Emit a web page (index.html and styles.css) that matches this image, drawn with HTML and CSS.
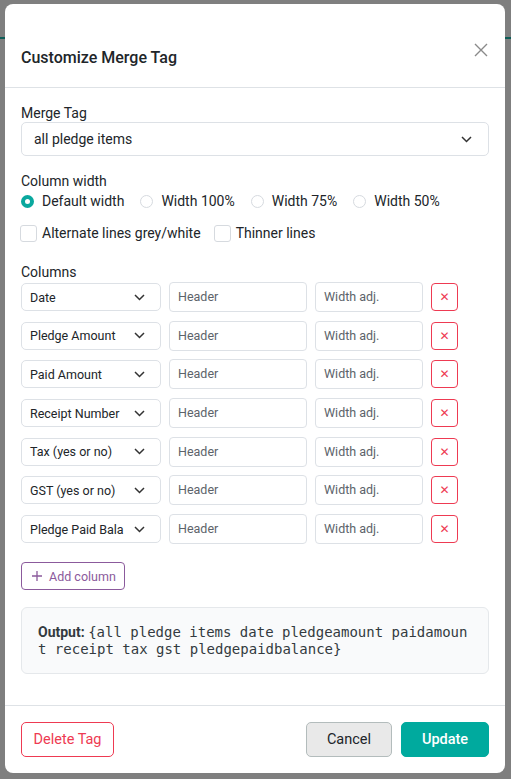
FILE: index.html
```html
<!DOCTYPE html>
<html>

<head>
    <meta http-equiv="Content-Type" content="text/html; charset=utf-8" />
    <title>Customize Merge Tag</title>
    <link rel="stylesheet" href="styles.css">
</head>

<body>
    <div class="modal">
        <div class="modal-header">
            <h5 class="modal-title">Customize Merge Tag</h5>
            <button class="close-btn" aria-label="Close">
                <svg width="14" height="14" viewBox="0 0 14 14"><path d="M1 1L13 13M13 1L1 13" stroke="#8a8a8a" stroke-width="1.4" fill="none"/></svg>
            </button>
        </div>

        <div class="modal-body">
            <label class="field-label">Merge Tag</label>
            <div class="select select-lg">
                <span>all pledge items</span>
                <svg class="chevron" width="11" height="7" viewBox="0 0 11 7"><path d="M1 1L5.5 5.5L10 1" stroke="#333" stroke-width="1.5" fill="none"/></svg>
            </div>

            <label class="field-label spaced">Column width</label>
            <div class="radio-row">
                <span class="radio checked"></span><span class="opt">Default width</span>
                <span class="radio"></span><span class="opt">Width 100%</span>
                <span class="radio"></span><span class="opt">Width 75%</span>
                <span class="radio"></span><span class="opt">Width 50%</span>
            </div>

            <div class="check-row">
                <span class="checkbox"></span><span class="opt">Alternate lines grey/white</span>
                <span class="checkbox"></span><span class="opt">Thinner lines</span>
            </div>

            <label class="field-label columns-label">Columns</label>
            <div class="col-list">
                <div class="col-row">
                    <div class="select select-sm"><span>Date</span><svg class="chevron" width="11" height="7" viewBox="0 0 11 7"><path d="M1 1L5.5 5.5L10 1" stroke="#333" stroke-width="1.5" fill="none"/></svg></div>
                    <div class="input header-input">Header</div>
                    <div class="input width-input">Width adj.</div>
                    <button class="remove-btn">&#x2715;</button>
                </div>
                <div class="col-row">
                    <div class="select select-sm"><span>Pledge Amount</span><svg class="chevron" width="11" height="7" viewBox="0 0 11 7"><path d="M1 1L5.5 5.5L10 1" stroke="#333" stroke-width="1.5" fill="none"/></svg></div>
                    <div class="input header-input">Header</div>
                    <div class="input width-input">Width adj.</div>
                    <button class="remove-btn">&#x2715;</button>
                </div>
                <div class="col-row">
                    <div class="select select-sm"><span>Paid Amount</span><svg class="chevron" width="11" height="7" viewBox="0 0 11 7"><path d="M1 1L5.5 5.5L10 1" stroke="#333" stroke-width="1.5" fill="none"/></svg></div>
                    <div class="input header-input">Header</div>
                    <div class="input width-input">Width adj.</div>
                    <button class="remove-btn">&#x2715;</button>
                </div>
                <div class="col-row">
                    <div class="select select-sm"><span>Receipt Number</span><svg class="chevron" width="11" height="7" viewBox="0 0 11 7"><path d="M1 1L5.5 5.5L10 1" stroke="#333" stroke-width="1.5" fill="none"/></svg></div>
                    <div class="input header-input">Header</div>
                    <div class="input width-input">Width adj.</div>
                    <button class="remove-btn">&#x2715;</button>
                </div>
                <div class="col-row">
                    <div class="select select-sm"><span>Tax (yes or no)</span><svg class="chevron" width="11" height="7" viewBox="0 0 11 7"><path d="M1 1L5.5 5.5L10 1" stroke="#333" stroke-width="1.5" fill="none"/></svg></div>
                    <div class="input header-input">Header</div>
                    <div class="input width-input">Width adj.</div>
                    <button class="remove-btn">&#x2715;</button>
                </div>
                <div class="col-row">
                    <div class="select select-sm"><span>GST (yes or no)</span><svg class="chevron" width="11" height="7" viewBox="0 0 11 7"><path d="M1 1L5.5 5.5L10 1" stroke="#333" stroke-width="1.5" fill="none"/></svg></div>
                    <div class="input header-input">Header</div>
                    <div class="input width-input">Width adj.</div>
                    <button class="remove-btn">&#x2715;</button>
                </div>
                <div class="col-row">
                    <div class="select select-sm"><span>Pledge Paid Bala</span><svg class="chevron" width="11" height="7" viewBox="0 0 11 7"><path d="M1 1L5.5 5.5L10 1" stroke="#333" stroke-width="1.5" fill="none"/></svg></div>
                    <div class="input header-input">Header</div>
                    <div class="input width-input">Width adj.</div>
                    <button class="remove-btn">&#x2715;</button>
                </div>
            </div>

            <button class="add-btn">
                <svg width="10" height="10" viewBox="0 0 10 10"><path d="M5 0V10M0 5H10" stroke="#8b5a9c" stroke-width="1.3"/></svg>
                Add column
            </button>

            <div class="output">
                <b>Output:</b> <code>{all pledge items date pledgeamount paidamount receipt tax gst pledgepaidbalance}</code>
            </div>
        </div>

        <div class="modal-footer">
            <button class="btn btn-delete">Delete Tag</button>
            <div class="footer-right">
                <button class="btn btn-cancel">Cancel</button>
                <button class="btn btn-update">Update</button>
            </div>
        </div>
    </div>
</body>

</html>
```

FILE: styles.css
```css
* {
    margin: 0;
    padding: 0;
    box-sizing: border-box;
}

body {
    background: linear-gradient(to bottom, transparent 37px, #0e5d57 37px, #0e5d57 39px, transparent 39px), #7f7f7f;
    font-family: Roboto, "Liberation Sans", sans-serif;
    color: #212529;
    height: 779px;
    overflow: hidden;
}

.modal {
    width: 500px;
    margin: 4px 0 0 5px;
    background: #fff;
    border-radius: 8px;
    height: 769px;
    display: flex;
    flex-direction: column;
}

.modal-header {
    display: flex;
    justify-content: space-between;
    align-items: flex-start;
    padding: 16px 16px 0 16px;
    height: 84px;
    border-bottom: 1px solid #dee2e6;
}

.modal-title {
    margin-top: 26px;
    font-size: 16px;
    font-weight: 500;
    line-height: 24px;
}

.close-btn {
    margin-top: 23px;
    margin-right: 1px;
    border: none;
    background: none;
    width: 14px;
    height: 14px;
    display: flex;
}

.modal-body {
    padding: 15px 16px 0 16px;
    flex: 1;
}

.field-label {
    display: block;
    font-size: 14px;
    line-height: 20px;
}

.field-label.spaced {
    margin-top: 15px;
}

.select {
    display: flex;
    align-items: center;
    justify-content: space-between;
    border: 1px solid #dde1e6;
    border-radius: 5px;
    background: #fff;
}

.select-lg {
    height: 34px;
    padding: 0 16px 0 12px;
    font-size: 14px;
    margin-top: -1px;
}

.select-sm {
    width: 140px;
    height: 28px;
    padding: 0 15px 0 8px;
    font-size: 12.5px;
}

.radio-row,
.check-row {
    display: flex;
    align-items: center;
    font-size: 14px;
    line-height: 20px;
}

.radio {
    width: 13px;
    height: 13px;
    border: 1px solid #d6dadf;
    border-radius: 50%;
    margin-right: 8px;
}

.radio.checked {
    border: 4px solid #0aa89e;
}

.radio-row .opt {
    margin-right: 16px;
}

.check-row {
    margin-top: 12px;
}

.checkbox {
    width: 17px;
    height: 17px;
    border: 1px solid #d6dadf;
    border-radius: 3px;
    margin-left: -1px;
    margin-right: 5px;
}

.check-row .opt {
    margin-right: 14px;
}

.columns-label {
    margin-top: 19px;
}

.col-list {
    display: flex;
    flex-direction: column;
    gap: 8.7px;
}

.col-row {
    display: flex;
    align-items: center;
    gap: 8px;
}

.input {
    height: 30px;
    border: 1px solid #dde1e6;
    border-radius: 4px;
    padding: 0 8px;
    font-size: 12.5px;
    line-height: 28px;
    color: #5c636a;
}

.header-input {
    width: 138px;
}

.width-input {
    width: 108px;
}

.remove-btn {
    width: 27px;
    height: 28px;
    border: 1px solid #ee3a52;
    border-radius: 4px;
    background: #fff;
    color: #ee3a52;
    font-size: 12px;
    font-weight: bold;
    font-family: "DejaVu Sans", sans-serif;
}

.add-btn {
    margin-top: 18px;
    display: flex;
    align-items: center;
    gap: 7px;
    height: 28px;
    padding: 0 8px 0 10px;
    border: 1px solid #8b5a9c;
    border-radius: 4px;
    background: #fff;
    color: #8b5a9c;
    font-family: Roboto, "Liberation Sans", sans-serif;
    font-size: 12.5px;
    white-space: nowrap;
}

.output {
    margin-top: 17px;
    background: #f9fafb;
    border: 1px solid #e5e8eb;
    border-radius: 6px;
    padding: 16px 16px;
    font-size: 14px;
    line-height: 17px;
    color: #333a40;
    word-break: break-all;
    height: 67px;
}

.output b {
    font-weight: 700;
}

.output code {
    font-family: "DejaVu Sans Mono", monospace;
    font-size: 14px;
}

.modal-footer {
    display: flex;
    justify-content: space-between;
    align-items: center;
    border-top: 1px solid #dee2e6;
    padding: 16px 16px 16px 16px;
}

.footer-right {
    display: flex;
    gap: 9px;
}

.btn {
    height: 35px;
    border-radius: 5px;
    font-family: Roboto, "Liberation Sans", sans-serif;
    font-size: 14.5px;
    background: #fff;
}

.btn-delete {
    width: 93px;
    border: 1px solid #ee3a52;
    color: #ee3a52;
}

.btn-cancel {
    width: 86px;
    border: 1px solid #b3bcbc;
    background: #e9e9e9;
    color: #212529;
}

.btn-update {
    width: 88px;
    border: 1px solid #00aa9e;
    background: #00aa9e;
    color: #fff;
    font-weight: 500;
}
```
